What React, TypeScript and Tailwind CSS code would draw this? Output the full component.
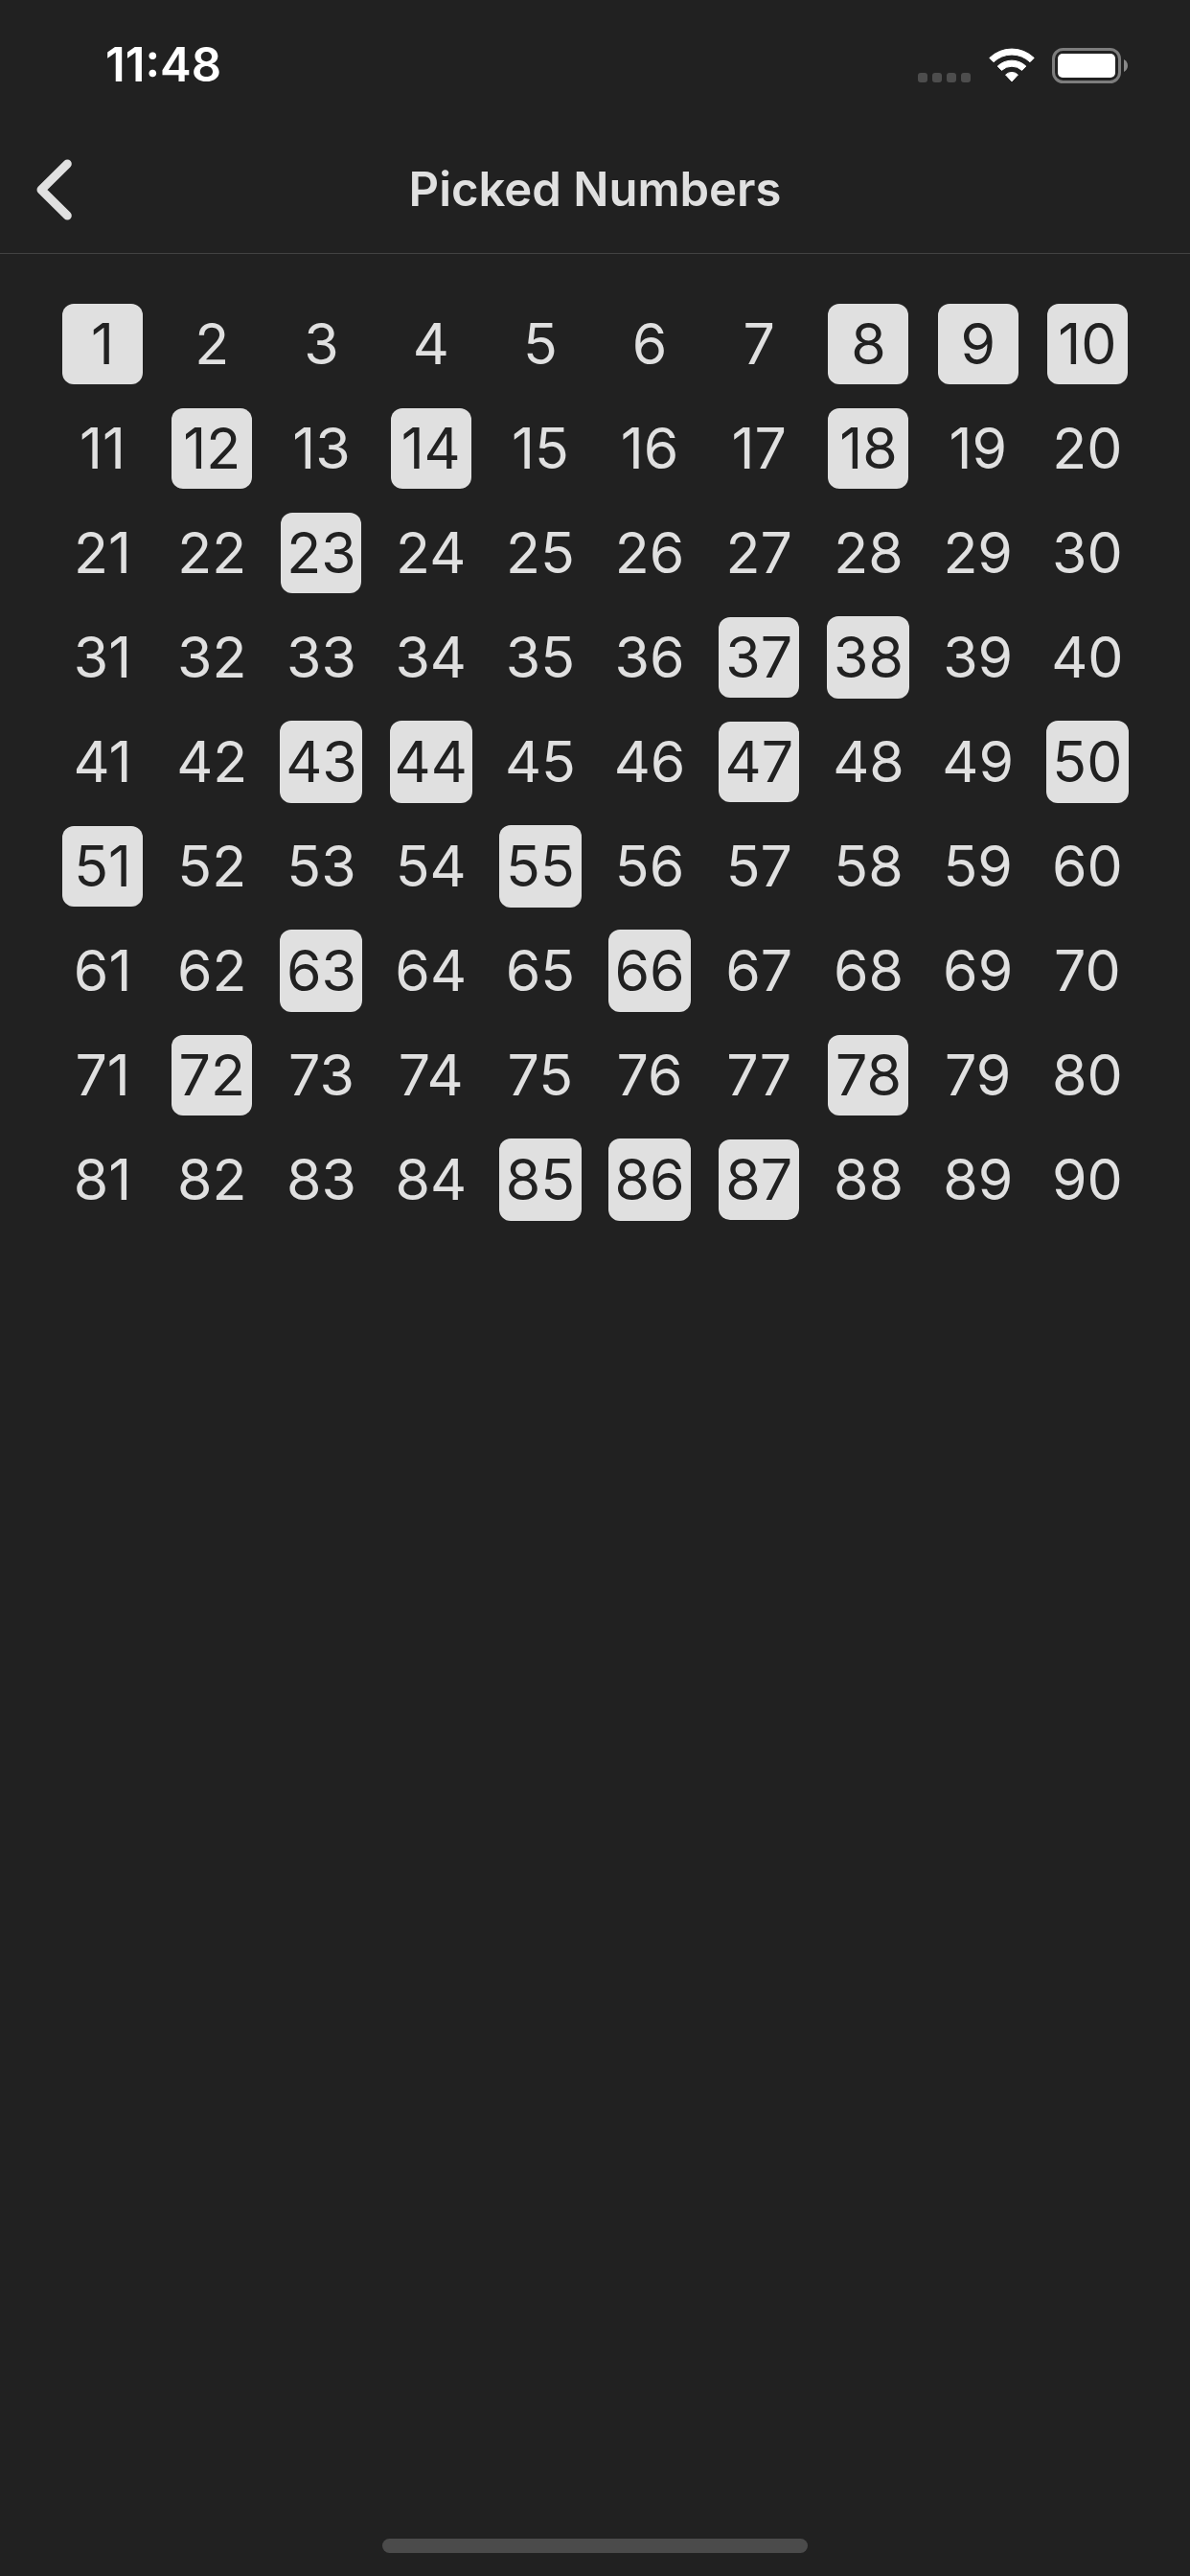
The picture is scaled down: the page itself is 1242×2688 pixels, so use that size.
const PICKED = new Set([
  1, 8, 9, 10, 12, 14, 18, 23, 37, 38, 43, 44, 47, 50, 51, 55, 63, 66, 72, 78, 85, 86, 87,
]);

const WIDE = new Set([38, 43, 44, 50, 55, 63, 66, 85, 86]);

const NUMBERS = Array.from({ length: 90 }, (_, i) => i + 1);

function StatusBar() {
  return (
    <div className="flex h-33 items-center justify-between pr-[65px] pl-[110px] text-white">
      <time className="pt-1 text-[49px] leading-14 font-semibold">11:48</time>
      <div className="flex items-end gap-[18px] pt-1">
        <svg width="56" height="11" viewBox="0 0 56 11" fill="#4d4d4d" aria-label="No signal">
          <rect x="0" y="0" width="10" height="10" rx="3" />
          <rect x="15" y="0" width="10" height="10" rx="3" />
          <rect x="30" y="0" width="10" height="10" rx="3" />
          <rect x="45" y="0" width="10" height="10" rx="3" />
        </svg>
        <svg width="48" height="37" viewBox="0 0 48 37" fill="white" stroke="white" strokeWidth="1" strokeLinejoin="round" aria-label="Wi-Fi">
          <path d="M.8 10.4A33.5 33.5 0 0 1 47.2 10.4L43 14.7A27.4 27.4 0 0 0 5 14.7Z" />
          <path d="M9.2 19.1A21.4 21.4 0 0 1 38.8 19.1L34.6 23.4A15.4 15.4 0 0 0 13.4 23.4Z" />
          <path d="M17.6 28A9.3 9.3 0 0 1 30.4 28L24 35Z" />
        </svg>
        <svg width="79" height="37" viewBox="0 0 79 37" fill="none" aria-label="Battery full">
          <rect x="1.5" y="1.5" width="69" height="34" rx="10" stroke="#7d7d7d" strokeWidth="3" />
          <rect x="6" y="6" width="60" height="25" rx="5" fill="white" />
          <path d="M75 12C80.300 14.500 80.300 22.500 75 25Z" fill="#8a8a8a" />
        </svg>
      </div>
    </div>
  );
}

function Header() {
  return (
    <header className="grid h-[133px] grid-cols-[1fr_auto_1fr] items-center border-b border-[#424242]">
      <button type="button" aria-label="Back" className="justify-self-start pl-[38px]">
        <svg width="38" height="64" viewBox="0 0 38 64" fill="none" stroke="currentColor" strokeWidth="9" strokeLinecap="round" strokeLinejoin="round">
          <path d="M32.300 5L5 32L32.300 59" />
        </svg>
      </button>
      <h1 className="text-[49px] leading-16 font-semibold">Picked Numbers</h1>
    </header>
  );
}

function NumberCell({ value }: { value: number }) {
  const picked = PICKED.has(value);
  const size = WIDE.has(value) ? "size-[86px]" : "size-[84px]";
  const tone = picked ? "bg-[#e0e0e0] text-[#212121]" : "";
  return (
    <li className="flex items-center justify-center">
      <span className={`flex shrink-0 items-center justify-center rounded-xl ${size} ${tone}`}>{value}</span>
    </li>
  );
}

export default function App() {
  return (
    <div className="flex min-h-screen flex-col bg-[#212121] font-[Inter,sans-serif] text-[#e0e0e0]">
      <StatusBar />
      <Header />
      <main className="flex-1 px-[50px] pt-[39px]">
        <ol className="grid auto-rows-[109px] grid-cols-10 text-[59px] leading-none">
          {NUMBERS.map((n) => (
            <NumberCell key={n} value={n} />
          ))}
        </ol>
      </main>
      <footer className="flex justify-center pb-6">
        <div className="h-[15px] w-[444px] rounded-full bg-[#4b4b4b]" />
      </footer>
    </div>
  );
}
